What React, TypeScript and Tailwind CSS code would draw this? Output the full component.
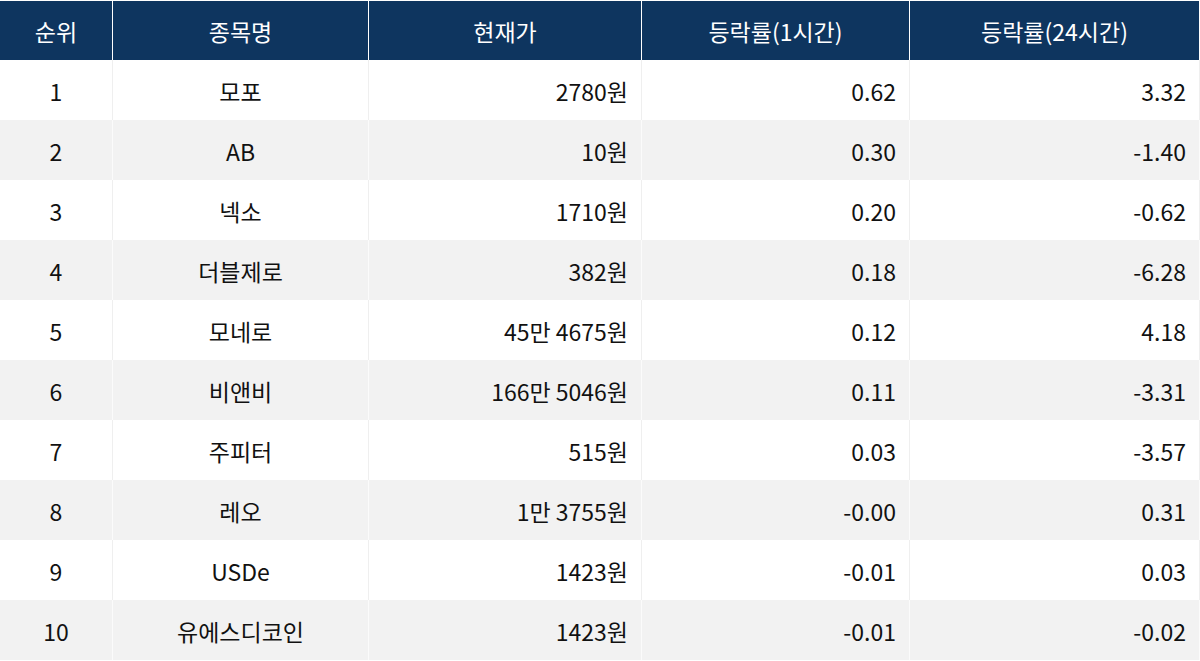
import React from "react";

const rows = [
  ["1", "모포", "2780원", "0.62", "3.32"],
  ["2", "AB", "10원", "0.30", "-1.40"],
  ["3", "넥소", "1710원", "0.20", "-0.62"],
  ["4", "더블제로", "382원", "0.18", "-6.28"],
  ["5", "모네로", "45만 4675원", "0.12", "4.18"],
  ["6", "비앤비", "166만 5046원", "0.11", "-3.31"],
  ["7", "주피터", "515원", "0.03", "-3.57"],
  ["8", "레오", "1만 3755원", "-0.00", "0.31"],
  ["9", "USDe", "1423원", "-0.01", "0.03"],
  ["10", "유에스디코인", "1423원", "-0.01", "-0.02"],
];

const headers = ["순위", "종목명", "현재가", "등락률(1시간)", "등락률(24시간)"];
const widths = ["w-[112px]", "w-[256px]", "w-[273px]", "w-[268px]", "w-[291px]"];

export default function App() {
  return (
    <div
      className="w-[1200px] h-[661px] bg-white pt-px text-[#111]"
      style={{ fontFamily: '"Noto Sans CJK KR", "Noto Sans", sans-serif' }}
    >
      <div className="flex h-[59px] bg-[#0e355f] text-white text-[23px]">
        {headers.map((h, i) => (
          <div
            key={h}
            className={`${widths[i]} flex items-center justify-center pt-[2px] ${i > 0 ? "border-l border-white" : ""} ${i === 4 ? "border-r border-white" : ""}`}
          >
            {h}
          </div>
        ))}
      </div>
      {rows.map((r, ri) => {
        const gray = ri % 2 === 1;
        return (
          <div
            key={ri}
            className={`flex h-[60px] text-[23px] ${gray ? "bg-[#f2f2f2]" : "bg-white"}`}
          >
            {r.map((c, ci) => (
              <div
                key={ci}
                className={`${widths[ci]} flex items-center pt-[2px] ${ci < 2 ? "justify-center" : "justify-end pr-[13px]"} ${ci > 0 ? (gray ? "border-l border-[#fbfbfb]" : "border-l border-[#efefef]") : ""} ${ci === 4 ? (gray ? "border-r border-[#fbfbfb]" : "border-r border-[#efefef]") : ""}`}
              >
                {c}
              </div>
            ))}
          </div>
        );
      })}
    </div>
  );
}
